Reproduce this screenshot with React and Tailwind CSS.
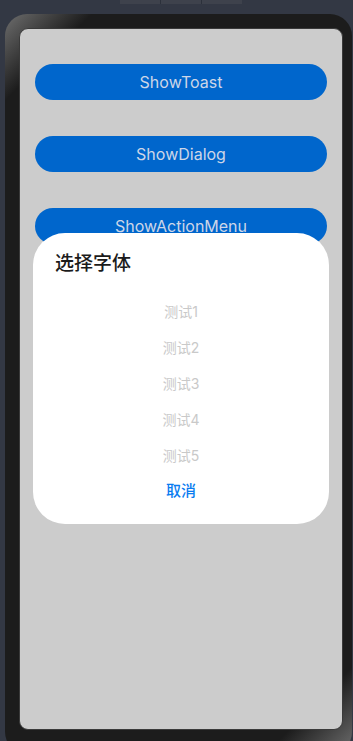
import React from "react";

const font = { fontFamily: '"Inter","Noto Sans CJK SC",sans-serif' };

export default function App() {
  const items = ["测试1", "测试2", "测试3", "测试4", "测试5"];
  return (
    <div className="relative h-[741px] w-[353px] overflow-hidden bg-[#333844]" style={font}>
      <div className="absolute left-[120px] top-0 flex h-[4px] w-[122px] gap-px bg-[#2c313b]">
        <div className="flex-1 bg-[#3e424c]" />
        <div className="flex-1 bg-[#3e424c]" />
        <div className="flex-1 bg-[#3e424c]" />
      </div>
      <div className="ml-[5px] mt-[14px] h-[740px] w-[347px] rounded-[22px] bg-[linear-gradient(135deg,#6e6e6e_0%,#1c1c1c_8%,#1c1c1c_92%,#6e6e6e_100%)] p-[14px]">
        <div className="relative flex h-[702px] w-[324px] flex-col items-center rounded-[9px] border border-[#3a3a3a] bg-[#cccccc] pt-[35px]">
          <div className="flex w-[292px] flex-col gap-[36px]">
            {["ShowToast", "ShowDialog", "ShowActionMenu"].map((t) => (
              <div
                key={t}
                className="flex h-[36px] items-center justify-center rounded-full bg-[#0066cc] text-[16px] text-[#cdd6e8]"
              >
                {t}
              </div>
            ))}
          </div>
          <div className="absolute left-[13px] top-[204px] flex w-[296px] flex-col rounded-[32px] bg-white pb-[15px] pt-[19px]">
            <div className="pl-[22px] text-[19px] leading-[24px] font-medium text-[#1b1b1b]">选择字体</div>
            <div className="mt-[17px] flex flex-col">
              {items.map((t) => (
                <div key={t} className="flex h-[36px] items-center justify-center text-[14px] text-[#c9c9c9]">
                  {t}
                </div>
              ))}
              <div className="flex h-[36px] items-center justify-center text-[15px] font-medium text-[#0a7cf0]">
                取消
              </div>
            </div>
          </div>
        </div>
      </div>
    </div>
  );
}
